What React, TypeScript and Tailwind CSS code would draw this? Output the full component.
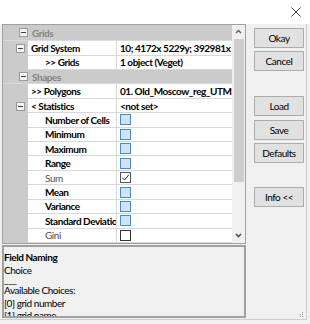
import React from "react";

type Row =
  | { kind: "cat"; label: string }
  | { kind: "prop"; label: string; value?: string; toggle?: boolean; indent?: boolean; bold?: boolean; box?: "blue" | "check" | "plain" };

const rows: Row[] = [
  { kind: "cat", label: "Grids" },
  { kind: "prop", label: "Grid System", value: "10; 4172x 5229y; 392981x 6182432y", toggle: true },
  { kind: "prop", label: ">> Grids", value: "1 object (Veget)", indent: true },
  { kind: "cat", label: "Shapes" },
  { kind: "prop", label: ">> Polygons", value: "01. Old_Moscow_reg_UTM37N" },
  { kind: "prop", label: "< Statistics", value: "<not set>", toggle: true },
  { kind: "prop", label: "Number of Cells", indent: true, box: "blue" },
  { kind: "prop", label: "Minimum", indent: true, box: "blue" },
  { kind: "prop", label: "Maximum", indent: true, box: "blue" },
  { kind: "prop", label: "Range", indent: true, box: "blue" },
  { kind: "prop", label: "Sum", indent: true, bold: false, box: "check" },
  { kind: "prop", label: "Mean", indent: true, box: "blue" },
  { kind: "prop", label: "Variance", indent: true, box: "blue" },
  { kind: "prop", label: "Standard Deviation", indent: true, box: "blue" },
  { kind: "prop", label: "Gini", indent: true, bold: false, box: "plain" },
];

function Minus() {
  return (
    <span className="flex h-[9px] w-[9px] items-center justify-center border border-[#9a9a9a] bg-[#f4f4f4]">
      <span className="h-px w-[5px] bg-[#404040]" />
    </span>
  );
}

function Box({ type }: { type: "blue" | "check" | "plain" }) {
  if (type === "blue") return <span className="block h-[11px] w-[11px] border border-[#4a8ad0] bg-[#cfe4f8]" />;
  if (type === "check")
    return (
      <span className="flex h-[11px] w-[11px] items-center justify-center border border-[#555] bg-white">
        <svg width="9" height="9" viewBox="0 0 9 9">
          <path d="M1 4.5 L3.5 7 L8 1.5" fill="none" stroke="#333" strokeWidth="1" />
        </svg>
      </span>
    );
  return <span className="block h-[11px] w-[11px] border border-[#333] bg-white" />;
}

function GridRow({ row, first }: { row: Row; first: boolean }) {
  const h = first ? "h-[16.5px]" : "h-[14.7px]";
  if (row.kind === "cat") {
    return (
      <div className={`flex ${h} items-center bg-[#cbcbcb] border-b border-[#dadada] text-[#858585] font-bold`}>
        <span className="ml-[16px] mr-[4px]">
          <Minus />
        </span>
        <span>{row.label}</span>
      </div>
    );
  }
  const bold = row.bold !== false;
  return (
    <div className={`flex ${h} items-stretch`}>
      <div className="flex w-[25px] shrink-0 items-center justify-end bg-[#cbcbcb] pr-[3px]">
        {row.toggle && <Minus />}
      </div>
      <div
        className={`flex w-[89px] shrink-0 items-center overflow-hidden whitespace-nowrap border-b border-r border-[#d8d8d8] bg-white ${
          row.indent ? "pl-[17px]" : "pl-[3px]"
        } ${bold ? "font-bold text-black" : "text-[#505050]"}`}
      >
        {row.label}
      </div>
      <div className="flex min-w-0 flex-1 items-center overflow-hidden whitespace-nowrap border-b border-[#d8d8d8] bg-white pl-[3px] font-bold">
        {row.box ? <Box type={row.box} /> : row.value}
      </div>
    </div>
  );
}

function Btn({ children, className = "" }: { children: React.ReactNode; className?: string }) {
  return (
    <div
      className={`flex h-[20px] w-[50px] items-center justify-center border border-[#adadad] bg-[#e1e1e1] text-black ${className}`}
    >
      {children}
    </div>
  );
}

export default function App() {
  return (
    <div
      className="relative flex h-[324px] w-[310px] flex-col overflow-hidden bg-[#f0f0f0] text-[10px] leading-none tracking-[-0.45px] text-black"
      style={{ fontFamily: "Lato, 'Liberation Sans', sans-serif" }}
    >
      <div className="flex h-[24px] shrink-0 items-start justify-end bg-white pr-[9px] pt-[7px]">
        <svg width="10" height="10" viewBox="0 0 10 10">
          <path d="M0.5 0.5 L9.5 9.5 M9.5 0.5 L0.5 9.5" stroke="#444" strokeWidth="1" />
        </svg>
      </div>
      <div className="flex h-[296px] border-b border-r border-[#cfcfcf] w-[307px]">
        <div className="ml-[2px] flex w-[244px] flex-col">
          <div className="flex h-[220px] border border-[#a0a0a0] bg-[#cbcbcb]">
            <div className="flex min-w-0 flex-1 flex-col overflow-hidden">
              {rows.map((r, i) => (
                <GridRow key={i} row={r} first={i === 0} />
              ))}
            </div>
            <div className="flex w-[13px] shrink-0 flex-col items-center bg-[#f0f0f0]">
              <svg width="13" height="14" viewBox="0 0 13 14">
                <path d="M4 8 L6.5 5.5 L9 8" fill="none" stroke="#606060" strokeWidth="1.4" />
              </svg>
              <div className="h-[143px] w-[10px] bg-[#cdcdcd]" />
              <div className="flex-1" />
              <svg width="13" height="14" viewBox="0 0 13 14">
                <path d="M4 5 L6.5 7.5 L9 5" fill="none" stroke="#505050" strokeWidth="1.6" />
              </svg>
            </div>
          </div>
          <div className="mt-[1px] h-[73px] overflow-hidden border-2 border-[#a0a0a0] px-0 pt-[4px] leading-[12.5px]">
            <div className="font-bold">Field Naming</div>
            <div>Choice</div>
            <div className="h-[8px] leading-[6px]">___</div>
            <div>Available Choices:</div>
            <div>[0] grid number</div>
            <div>[1] grid name</div>
          </div>
        </div>
        <div className="ml-[8px] flex flex-col pt-[4px]">
          <Btn>Okay</Btn>
          <Btn className="mt-[3px]">Cancel</Btn>
          <Btn className="mt-[25px]">Load</Btn>
          <Btn className="mt-[4px]">Save</Btn>
          <Btn className="mt-[3px]">Defaults</Btn>
          <Btn className="mt-[24px]">Info &lt;&lt;</Btn>
          <div className="flex-1" />
          <svg className="ml-[45px] mb-[2px]" width="5" height="5" viewBox="0 0 5 5">
            <rect x="3" y="0" width="1" height="1" fill="#a0a0a0" />
            <rect x="3" y="2" width="1" height="1" fill="#a0a0a0" />
            <rect x="1" y="2" width="1" height="1" fill="#a0a0a0" />
            <rect x="3" y="4" width="1" height="1" fill="#a0a0a0" />
            <rect x="1" y="4" width="1" height="1" fill="#a0a0a0" />
          </svg>
        </div>
      </div>
    </div>
  );
}
